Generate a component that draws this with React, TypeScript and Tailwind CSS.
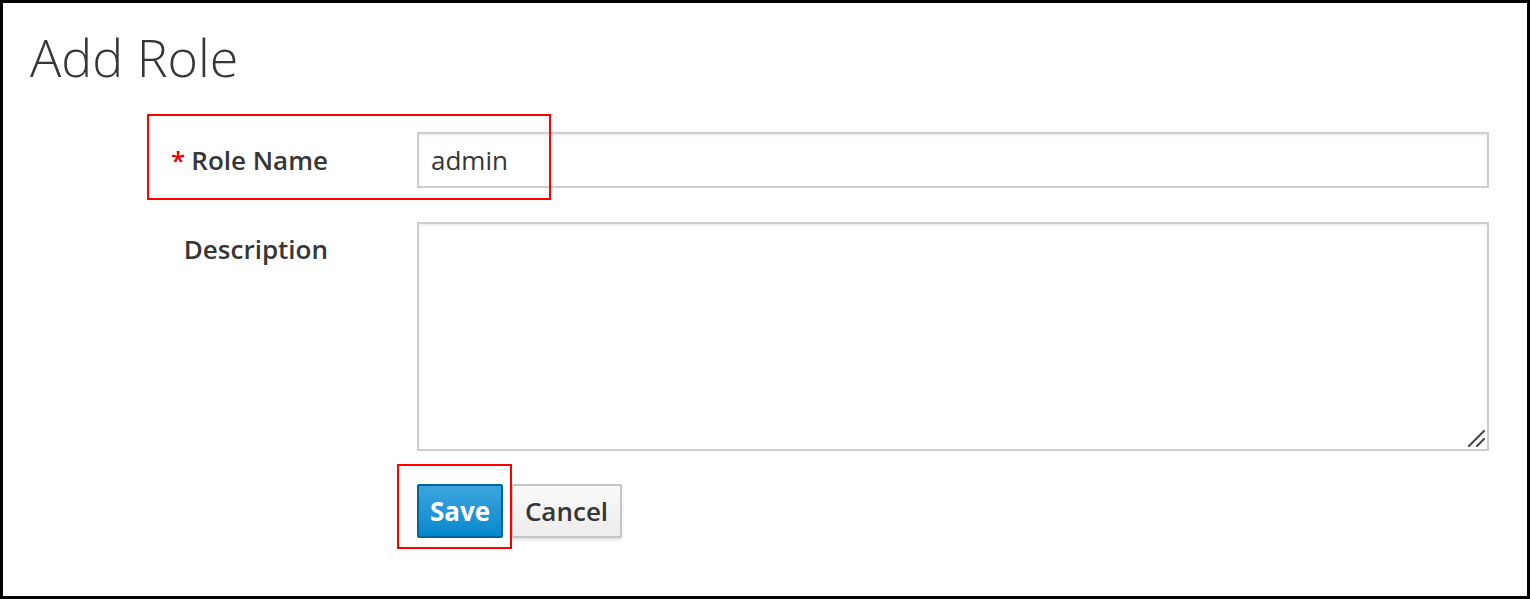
export default function App() {
  return (
    <div className="relative w-[1530px] h-[599px] bg-white border-[3px] border-black font-['Open_Sans',sans-serif] text-[#363636] overflow-hidden">
      {/* Page title */}
      <h1 className="pl-[27px] pt-[22px] text-[52px] leading-[64px] font-light">Add Role</h1>

      {/* Form */}
      <form className="mt-[43px] grid grid-cols-[325px_1072px] gap-x-[89px] gap-y-[34px]">
        <label className="text-right text-[26px] leading-[56px] font-semibold">
          <span className="text-[#e00] mr-[6px]">*</span>Role Name
        </label>
        <input
          type="text"
          defaultValue="admin"
          className="h-[56px] w-full border-2 border-[#cdcdcd] px-[12px] text-[26px] text-[#363636] shadow-[inset_0_2px_2px_rgba(0,0,0,0.06)] outline-none"
        />

        <label className="text-right text-[26px] leading-[55px] font-semibold">Description</label>
        <div className="relative h-[229px]">
          <textarea className="block h-full w-full resize-none border-2 border-[#cdcdcd] px-[12px] py-[8px] text-[26px] shadow-[inset_0_2px_2px_rgba(0,0,0,0.06)] outline-none" />
          <svg className="absolute right-[4px] bottom-[4px] w-[18px] h-[18px] pointer-events-none" viewBox="0 0 18 18">
            <path d="M2 17 L17 2 M10 17 L17 10" stroke="#4a4a4a" strokeWidth="2.2" strokeLinecap="round" />
          </svg>
        </div>

        <div className="col-start-2 -mt-[1px] flex gap-[8px]">
          <button
            type="button"
            className="w-[86px] h-[54px] rounded-[2px] border-2 border-[#00659c] bg-gradient-to-b from-[#39a5dc] to-[#0088ce] text-[26px] font-bold text-white"
          >
            Save
          </button>
          <button
            type="button"
            className="w-[111px] h-[54px] rounded-[2px] border-2 border-[#c6c6c6] bg-gradient-to-b from-[#fafafa] to-[#ececec] text-[26px] font-semibold text-[#363636] shadow-[0_2px_3px_rgba(0,0,0,0.12)]"
          >
            Cancel
          </button>
        </div>
      </form>

      {/* Annotation boxes */}
      <div className="absolute left-[144px] top-[111px] w-[404px] h-[86px] border-2 border-[#f00] pointer-events-none" />
      <div className="absolute left-[394px] top-[461px] w-[115px] h-[85px] border-2 border-[#f00] pointer-events-none" />
    </div>
  );
}
